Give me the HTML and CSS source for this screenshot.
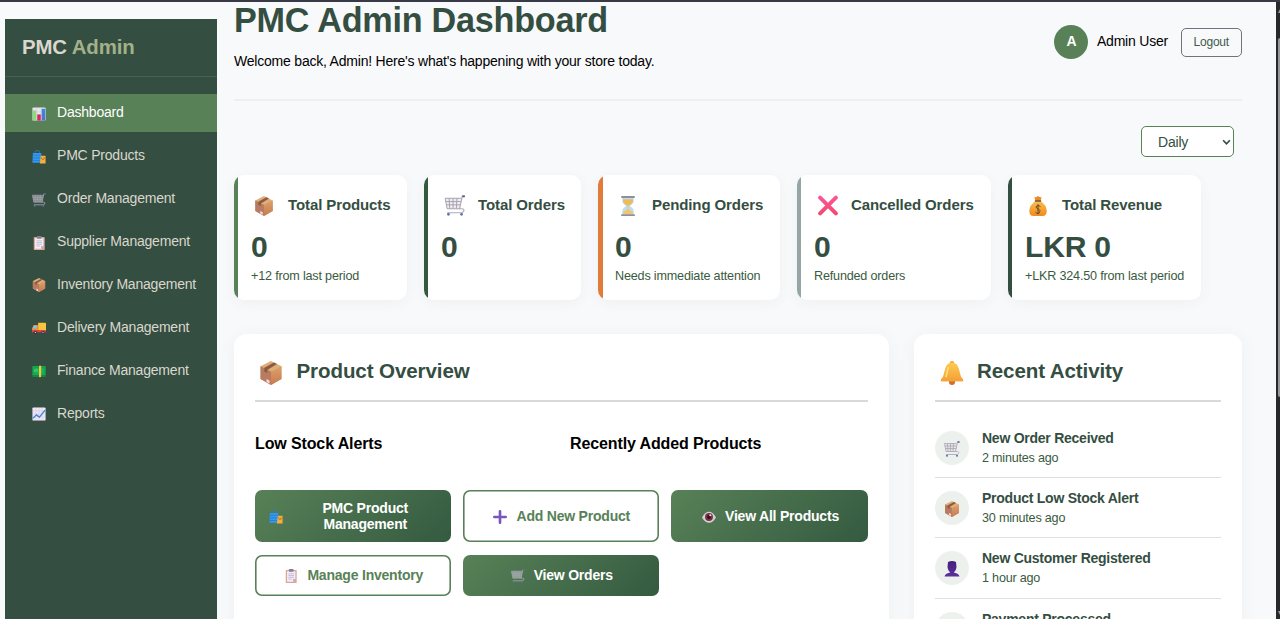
FILE: index.html
```html
<!DOCTYPE html>
<html lang="en">
<head>
<meta charset="utf-8">
<title>PMC Admin Dashboard</title>
<link rel="stylesheet" href="styles.css">
</head>
<body>
<svg class="sprite" width="0" height="0" aria-hidden="true">
  <defs>
    <linearGradient id="gold" x1="0" y1="0" x2="0" y2="1"><stop offset="0" stop-color="#f9c04e"/><stop offset="1" stop-color="#f08a1d"/></linearGradient>
    <linearGradient id="bellGold" x1="0" y1="0" x2="0" y2="1"><stop offset="0" stop-color="#ffcb52"/><stop offset="1" stop-color="#f3a035"/></linearGradient>
    <linearGradient id="boxRight" x1="0" y1="0" x2="0" y2="1"><stop offset="0" stop-color="#dda06c"/><stop offset="1" stop-color="#c77b50"/></linearGradient>
    <linearGradient id="boxLeft" x1="0" y1="0" x2="0" y2="1"><stop offset="0" stop-color="#b47d5d"/><stop offset="1" stop-color="#bd7a66"/></linearGradient>
    <linearGradient id="violet" x1="0" y1="0" x2="0" y2="1"><stop offset="0" stop-color="#44207c"/><stop offset="1" stop-color="#5d2f9c"/></linearGradient>
    <linearGradient id="pink" gradientUnits="userSpaceOnUse" x1="0" y1="0" x2="0" y2="32"><stop offset="0" stop-color="#f9589a"/><stop offset="1" stop-color="#f5466c"/></linearGradient>
    <linearGradient id="blueBar" x1="0" y1="0" x2="0" y2="1"><stop offset="0" stop-color="#2d8fe0"/><stop offset="1" stop-color="#4f74d0"/></linearGradient>
  </defs>
  <symbol id="i-box" viewBox="0 0 32 32">
    <path d="M16 0 30 7v17L16 32 2 24V7z" fill="#e0ad78"/>
    <path d="M2 7 16 14v18L2 24z" fill="url(#boxLeft)"/>
    <path d="M30 7 16 14v18l14-8z" fill="url(#boxRight)"/>
    <path d="M20 2 7 9v5l4 2v-4l13-8z" fill="#8a5a45"/>
    <path d="m10 24 4 2v4l-4-2z" fill="#f2dcd8"/>
  </symbol>
  <symbol id="i-bars" viewBox="0 0 32 32">
    <rect x="1" y="1" width="30" height="30" rx="2" fill="#e9e3f0"/>
    <path d="M1 11h30M1 21h30M11 1v30M21 1v30" stroke="#cfc5da" stroke-width="1"/>
    <rect x="2" y="8" width="8" height="23" fill="#8bdc7a"/>
    <rect x="12" y="17" width="8" height="14" fill="#d8285f"/>
    <rect x="22" y="4" width="8" height="27" fill="url(#blueBar)"/>
  </symbol>
  <symbol id="i-bags" viewBox="0 0 32 32">
    <path d="M7 8V5q0-4 5-4t5 4v3" fill="none" stroke="#3f79b6" stroke-width="2"/>
    <path d="M2 7h19l2 22H1z" fill="#3199ee"/>
    <path d="M2 12h20M2 18h20M1 24h21" stroke="#2475c8" stroke-width="1.5"/>
    <path d="M20 13h11v18H18z" fill="#f8ad3f"/>
    <path d="M22 17v3q3 4 6 0v-3" fill="none" stroke="#8e5b25" stroke-width="1.6"/>
  </symbol>
  <symbol id="i-cart" viewBox="0 0 32 32">
    <path d="M1 5h24l-2 16H4z" fill="#dcd8e3" fill-opacity=".45"/>
    <path d="M1 5h24M2 10h23M3 15h21M4 21h19M1 5l3 16M7 5l1 16M13 5v16M19 5l-1 16" fill="none" stroke="#a7a2af" stroke-width="1.5"/>
    <path d="M31 2h-4l-4 19h4q4 1 2 4l-2 2H4" fill="none" stroke="#b0a9b8" stroke-width="1.8"/>
    <path d="M31 2h-4" stroke="#4c6687" stroke-width="3"/>
    <circle cx="6" cy="29.5" r="2" fill="#5870ad"/><circle cx="26" cy="29.5" r="2" fill="#5870ad"/>
  </symbol>
  <symbol id="i-clip" viewBox="0 0 32 32">
    <rect x="4" y="2" width="25" height="30" rx="2" fill="#d9a896"/>
    <path d="M7 5h19v18l-5 6H7z" fill="#f3edfb"/>
    <path d="M26 23h-5v6z" fill="#b7a3c7"/>
    <rect x="11" y="0" width="11" height="6" rx="2" fill="#858092"/>
    <path d="M10 11h13M10 15h13M10 19h13M10 23h8" stroke="#b1a6c5" stroke-width="1.5"/>
  </symbol>
  <symbol id="i-truck" viewBox="0 0 32 32">
    <path d="M14 4h16q2 0 2 2v16H14z" fill="#fcc33d"/>
    <path d="M4 9h10v15H0v-7z" fill="#f08a35"/>
    <path d="M4 11h7v6H1z" fill="#7cc4f0"/>
    <path d="M0 21h32v5H0z" fill="#e23c36"/>
    <circle cx="8" cy="26" r="4" fill="#40384c"/><circle cx="25" cy="26" r="4" fill="#40384c"/>
    <circle cx="8" cy="26" r="1.5" fill="#c4bccb"/><circle cx="25" cy="26" r="1.5" fill="#c4bccb"/>
  </symbol>
  <symbol id="i-cash" viewBox="0 0 32 32">
    <path d="M1 5h30v21H1z" fill="#16b454"/>
    <path d="M4 8h24v15H4z" fill="none" stroke="#08a043" stroke-width="1.3"/>
    <circle cx="9" cy="15" r="4" fill="#62dc83"/>
    <path d="M10.500 12h-3v3h3v3h-3" fill="none" stroke="#087d39" stroke-width="1"/>
    <path d="M16 4h5v26h-5z" fill="#f4c644"/>
    <path d="M21 26h10v3H21zM1 26h15v3H1z" fill="#0a9a48"/>
  </symbol>
  <symbol id="i-trend" viewBox="0 0 32 32">
    <rect x="1" y="1" width="30" height="30" rx="2" fill="#efe7f6"/>
    <path d="M1 9h30M1 16h30M1 23h30M9 1v30M16 1v30M23 1v30" stroke="#cdbddc" stroke-width="1"/>
    <path d="m2 26 8-8 7 5L30 7" fill="none" stroke="#3188d5" stroke-width="3"/>
  </symbol>
  <symbol id="i-hourglass" viewBox="0 0 32 32">
    <path d="M7 3h18v5q0 4-6 8 6 4 6 8v5H7v-5q0-4 6-8-6-4-6-8z" fill="#b9def7"/>
    <path d="M8 5h16v4q-2 4-8 7-6-3-8-7z" fill="#efbb59"/>
    <path d="M15 16h2v5l7 5v3H8v-3l7-5z" fill="#f3c469"/>
    <rect x="5" y="0" width="22" height="3" rx="1" fill="#8c909c"/>
    <rect x="5" y="29" width="22" height="3" rx="1" fill="#8c909c"/>
  </symbol>
  <symbol id="i-cross" viewBox="0 0 32 32">
    <path d="M4 4 28 28M28 4 4 28" fill="none" stroke="url(#pink)" stroke-width="6" stroke-linecap="round"/>
  </symbol>
  <symbol id="i-sack" viewBox="0 0 32 32">
    <path d="M10 1q3 2 6-1 3 3 6 1l-2 7h-8z" fill="#e98b28"/>
    <path d="M12 8h8q10 7 10 16 0 8-7 8H9q-7 0-7-8 0-9 10-16z" fill="url(#gold)"/>
    <path d="M11 8h10" stroke="#7b5741" stroke-width="2.500"/>
    <path d="M20 17q-3-3-6-1t1 4 4 3-1 4-6-1M16 13v16" fill="none" stroke="#684629" stroke-width="1.600"/>
  </symbol>
  <symbol id="i-bell" viewBox="0 0 32 32">
    <circle cx="16" cy="28" r="4" fill="#cf6f2a"/>
    <circle cx="16" cy="3" r="3" fill="#f0a136"/>
    <path d="M16 2q7 0 9 8l3 11q3 3 3 6H1q0-3 3-6l3-11q2-8 9-8z" fill="url(#bellGold)"/>
    <path d="M1 27q0-2 2-4h26q2 2 2 4z" fill="#f3a23c"/>
    <path d="M11 9 8 21" stroke="#ffe184" stroke-width="2" stroke-linecap="round"/>
  </symbol>
  <symbol id="i-plus" viewBox="0 0 32 32">
    <path d="M16 3v26M3 16h26" stroke="#7a55bd" stroke-width="6" stroke-linecap="round"/>
  </symbol>
  <symbol id="i-eye" viewBox="0 0 32 32">
    <path d="M0 17Q7 4 16 4t16 13q-7 12-16 12T0 17z" fill="#d9ccd8"/>
    <circle cx="16" cy="16" r="9" fill="#74353f"/>
    <circle cx="16" cy="16" r="4.500" fill="#2a1320"/>
    <circle cx="19" cy="12" r="2.500" fill="#f0dce2"/>
  </symbol>
  <symbol id="i-user" viewBox="0 0 32 32">
    <path d="M8 2q8-4 16 0l1 10q-1 8-5 10v1q10 2 11 8H1q1-6 11-8v-1q-4-2-5-10z" fill="url(#violet)"/>
  </symbol>
</svg>

<div class="window-edge"></div>
<div class="viewport">
  <aside class="sidebar">
    <div class="brand">PMC <span class="brand-accent">Admin</span></div>
    <nav class="nav">
      <a class="nav-item active"><svg class="icon"><use href="#i-bars"/></svg>Dashboard</a>
      <a class="nav-item"><svg class="icon"><use href="#i-bags"/></svg>PMC Products</a>
      <a class="nav-item"><svg class="icon"><use href="#i-cart"/></svg>Order Management</a>
      <a class="nav-item"><svg class="icon"><use href="#i-clip"/></svg>Supplier Management</a>
      <a class="nav-item"><svg class="icon"><use href="#i-box"/></svg>Inventory Management</a>
      <a class="nav-item"><svg class="icon"><use href="#i-truck"/></svg>Delivery Management</a>
      <a class="nav-item"><svg class="icon"><use href="#i-cash"/></svg>Finance Management</a>
      <a class="nav-item"><svg class="icon"><use href="#i-trend"/></svg>Reports</a>
    </nav>
  </aside>

  <main class="main">
    <header class="header">
      <div>
        <h1 class="title">PMC Admin Dashboard</h1>
        <p class="welcome">Welcome back, Admin! Here's what's happening with your store today.</p>
      </div>
      <div class="user">
        <div class="avatar">A</div>
        <span class="user-name">Admin User</span>
        <button class="logout">Logout</button>
      </div>
    </header>

    <div class="filter">
      <div class="select-wrap">
        <select class="period"><option>Daily</option></select>
        <svg class="chevron" viewBox="0 0 8 6"><path d="M1 1l3 3.200L7 1" fill="none" stroke="#344e41" stroke-width="1.500"/></svg>
      </div>
    </div>

    <section class="stats">
      <article class="stat products">
        <div class="stat-head"><svg class="icon stat-icon"><use href="#i-box"/></svg>Total Products</div>
        <div class="stat-value">0</div><div class="stat-note">+12 from last period</div>
      </article>
      <article class="stat orders">
        <div class="stat-head"><svg class="icon stat-icon wide"><use href="#i-cart"/></svg>Total Orders</div>
        <div class="stat-value">0</div>
      </article>
      <article class="stat pending">
        <div class="stat-head"><svg class="icon stat-icon"><use href="#i-hourglass"/></svg>Pending Orders</div>
        <div class="stat-value">0</div><div class="stat-note">Needs immediate attention</div>
      </article>
      <article class="stat cancelled">
        <div class="stat-head"><svg class="icon stat-icon wide"><use href="#i-cross"/></svg>Cancelled Orders</div>
        <div class="stat-value">0</div><div class="stat-note">Refunded orders</div>
      </article>
      <article class="stat revenue">
        <div class="stat-head"><svg class="icon stat-icon"><use href="#i-sack"/></svg>Total Revenue</div>
        <div class="stat-value">LKR 0</div><div class="stat-note">+LKR 324.50 from last period</div>
      </article>
    </section>

    <div class="panels">
      <section class="panel overview">
        <h2 class="panel-title"><svg class="icon panel-icon"><use href="#i-box"/></svg>Product Overview</h2>
        <div class="columns">
          <h3 class="column-title">Low Stock Alerts</h3>
          <h3 class="column-title">Recently Added Products</h3>
        </div>
        <div class="actions">
          <button class="btn primary"><svg class="icon"><use href="#i-bags"/></svg><span class="btn-label two-line">PMC Product Management</span></button>
          <button class="btn outline"><svg class="icon"><use href="#i-plus"/></svg><span class="btn-label">Add New Product</span></button>
          <button class="btn primary"><svg class="icon"><use href="#i-eye"/></svg><span class="btn-label">View All Products</span></button>
          <button class="btn outline"><svg class="icon"><use href="#i-clip"/></svg><span class="btn-label">Manage Inventory</span></button>
          <button class="btn primary"><svg class="icon"><use href="#i-cart"/></svg><span class="btn-label">View Orders</span></button>
        </div>
      </section>

      <section class="panel activity">
        <h2 class="panel-title"><svg class="icon panel-icon"><use href="#i-bell"/></svg>Recent Activity</h2>
        <div class="feed">
          <div class="event"><div class="bubble"><svg class="icon"><use href="#i-cart"/></svg></div><div><div class="event-title">New Order Received</div><div class="event-time">2 minutes ago</div></div></div>
          <div class="event"><div class="bubble"><svg class="icon"><use href="#i-box"/></svg></div><div><div class="event-title">Product Low Stock Alert</div><div class="event-time">30 minutes ago</div></div></div>
          <div class="event"><div class="bubble"><svg class="icon"><use href="#i-user"/></svg></div><div><div class="event-title">New Customer Registered</div><div class="event-time">1 hour ago</div></div></div>
          <div class="event"><div class="bubble"></div><div><div class="event-title">Payment Processed</div></div></div>
        </div>
      </section>
    </div>
  </main>

  <div class="scrollbar">
    <svg class="arrow" viewBox="0 0 2 4"><path d="M0 4 2 0v4z" fill="#9a9a9a"/></svg>
    <div class="thumb"></div>
    <svg class="arrow" viewBox="0 0 2 4"><path d="M0 0 2 4V0z" fill="#9a9a9a"/></svg>
  </div>
</div>
</body>
</html>
```
FILE: styles.css
```css
* { box-sizing: border-box; }
html { font-size: 14px; }
body {
  margin: 0;
  height: 619px;
  overflow: hidden;
  display: flex;
  flex-direction: column;
  background: #f8f9fb;
  color: #000;
  font: 1rem "Liberation Sans", Arial, sans-serif;
  letter-spacing: -.21px;
}
h1, h2, h3, p { margin: 0; }
button, select { font-family: inherit; letter-spacing: inherit; }
.sprite { position: absolute; }
.icon { width: 14px; height: 14px; flex: none; display: block; }

.window-edge { height: 2px; flex: none; background: #383a48; }
.viewport { flex: 1; min-height: 0; display: flex; overflow: hidden; }

.sidebar {
  width: 212px;
  flex: none;
  margin: 17px 0 0 5px;
  background: #344e41;
  color: #dad7cd;
}
.brand {
  height: 58px;
  padding: 16px 17px 0;
  border-bottom: 1px solid #48604f;
  font-size: 20.4px;
  line-height: 25px;
  font-weight: bold;
  letter-spacing: -.12px;
}
.brand-accent { color: #a3b18a; }
.nav { display: flex; flex-direction: column; gap: 4.9px; padding-top: 17px; }
.nav-item {
  height: 38px;
  display: flex;
  align-items: center;
  gap: 11px;
  padding: 0 0 1.2px 27px;
}
.nav-item .icon { margin-top: 3px; }
.nav-item.active { background: #588157; color: #fff; }

.main {
  width: 1008px;
  flex: none;
  margin-left: 17px;
}
.header {
  height: 99px;
  display: flex;
  justify-content: space-between;
  border-bottom: 2px solid #edf0ef;
}
.title { font-size: 34.2px; line-height: 36px; color: #344e41; letter-spacing: -.25px; }
.welcome { margin-top: 15px; line-height: 16px; }
.user { height: 80px; display: flex; align-items: center; }
.avatar {
  width: 34px;
  height: 34px;
  border-radius: 50%;
  background: #588157;
  color: #fff;
  font-weight: bold;
  line-height: 33px;
  text-align: center;
}
.user-name { margin: -2px 12.5px 0 8.5px; }
.logout {
  width: 61.5px;
  height: 29px;
  padding: 0;
  border: 1px solid #6c757d;
  border-radius: 5px;
  background: transparent;
  color: #3f5a4b;
  font-size: 12px;
}

.filter { display: flex; justify-content: flex-end; padding: 25px 8px 0 0; }
.select-wrap { position: relative; width: 93px; height: 31px; }
.period {
  appearance: none;
  width: 100%;
  height: 100%;
  padding: 0 16px;
  border: 1px solid #588157;
  border-radius: 5px;
  background: #fff;
  color: #344e41;
  font-size: 1rem;
}
.chevron { position: absolute; right: 3px; top: 13px; width: 9px; height: 7px; }

.stats {
  display: grid;
  grid-template-columns: 173px 157px 182px 194px 193px;
  gap: 17px;
  margin-top: 18px;
}
.stat {
  --accent: #588157;
  --bar: 4px;
  height: 125px;
  padding: 17px 0 0 17px;
  border-radius: 10px;
  background: linear-gradient(to right, var(--accent) var(--bar), #fff var(--bar));
  box-shadow: 0 3px 13px rgba(52, 78, 65, .05);
  color: #344e41;
}
.stat.orders { --accent: #34593f; }
.stat.pending { --accent: #e07b39; --bar: 5px; }
.stat.cancelled { --accent: #95a5a6; }
.stat.revenue { --accent: #344e41; }
.stat-head {
  height: 24px;
  margin-bottom: 14px;
  display: flex;
  align-items: center;
  font-size: 15px;
  font-weight: bold;
  letter-spacing: -.1px;
  white-space: nowrap;
}
.stat-icon { width: 20px; height: 20px; margin: 3px 14px 0 3px; }
.stat-icon.wide { width: 22px; height: 21px; margin-right: 12px; }
.stat-value { font-size: 30.1px; line-height: 34px; font-weight: bold; }
.stat-note { margin-top: 4px; font-size: 12.6px; line-height: 16px; letter-spacing: -.18px; color: #3a5a40; }

.panels {
  display: grid;
  grid-template-columns: 655px 328px;
  gap: 25px;
  margin-top: 34px;
}
.panel {
  height: 340px;
  padding: 21px;
  border-radius: 13px;
  background: #fff;
  box-shadow: 0 3px 17px rgba(52, 78, 65, .06);
}
.panel-title {
  height: 47px;
  display: flex;
  border-bottom: 2px solid #d9d9d5;
  color: #344e41;
  font-size: 20.55px;
  line-height: 32px;
  letter-spacing: -.1px;
}
.panel-icon { width: 24px; height: 24px; margin: 6px 13.5px 0 4px; }
.activity .panel-icon { margin-left: 4.5px; }
.columns { display: grid; grid-template-columns: 1fr 1fr; gap: 17px; padding-top: 31px; }
.column-title { font-size: 16px; line-height: 21px; height: 20px; letter-spacing: -.12px; }
.actions {
  display: grid;
  grid-template-columns: 195.5px 195.5px 1fr;
  grid-template-rows: 52px 41px;
  gap: 12.5px;
  margin-top: 37px;
}
.btn {
  display: flex;
  align-items: center;
  justify-content: center;
  gap: 9px;
  padding: 0 12px 0 14px;
  border: 0;
  border-radius: 7px;
  font-size: 1rem;
  font-weight: bold;
}
.btn .icon { margin-top: 2px; }
.btn.primary { background: linear-gradient(135deg, #588157, #345a40); color: #fff; }
.btn.outline { background: #fff; color: #588157; box-shadow: inset 0 0 0 1.6px #588157; }
.btn-label { line-height: 16px; }
.two-line { flex: 1; padding: 0 20px; }

.feed { padding-top: 15.7px; }
.event {
  height: 60.3px;
  display: flex;
  gap: 13px;
  padding-top: 13px;
  border-bottom: 1px solid #dfe1df;
}
.bubble {
  width: 34px;
  height: 34px;
  flex: none;
  display: flex;
  align-items: center;
  justify-content: center;
  border-radius: 50%;
  background: #edf1ee;
}
.bubble .icon { width: 16px; height: 16px; margin-top: 2px; }
.event-title { height: 16px; line-height: 14.4px; font-weight: bold; color: #344e41; letter-spacing: -.25px; }
.event-time { margin-top: 3px; font-size: 12.6px; line-height: 16px; color: #3a5a40; }

.scrollbar {
  width: 4px;
  flex: none;
  margin-left: auto;
  padding: 7px 0 4px 2px;
  display: flex;
  flex-direction: column;
  background: #29292b;
}
.arrow { display: block; width: 2px; height: 4px; flex: none; }
.thumb { height: 359px; margin: 25px 0 auto; border-radius: 2px 0 0 2px; background: #9a9a9a; }
```
